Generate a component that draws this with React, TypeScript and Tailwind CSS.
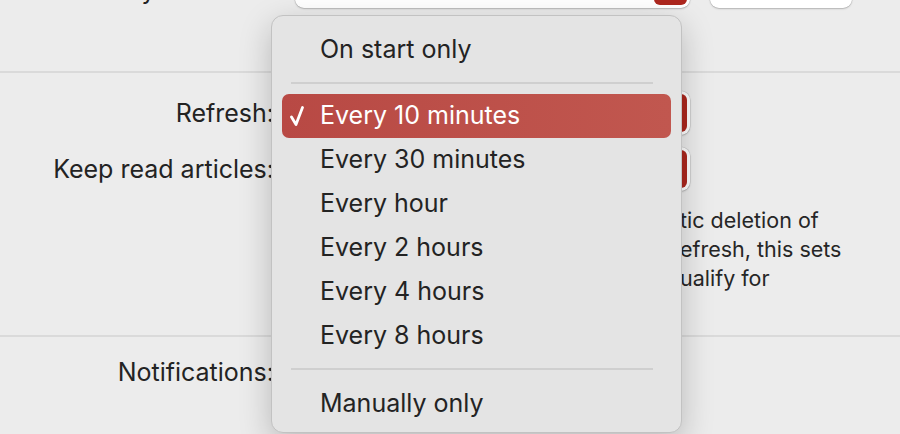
import { Fragment } from 'react';

const options = ['Every 10 minutes', 'Every 30 minutes', 'Every hour', 'Every 2 hours', 'Every 4 hours', 'Every 8 hours'];

// the start of each line is hidden under the open menu, only the tails show
const descLines = [
  ['Enables automa', 'tic deletion of'],
  ['read articles after each r', 'efresh, this sets'],
  ['how old they must be to q', 'ualify for'],
];

const PopUp = ({ width = 'w-[395px]' }: { width?: string }) => (
  <div className={`flex h-[44px] ${width} justify-end rounded-[9px] bg-white p-[3px] shadow-[0_0_0_0.5px_rgba(0,0,0,0.14),0_1px_2px_rgba(0,0,0,0.18)]`}>
    <div className="w-[33px] rounded-[6px] bg-[#ad271e]" />
  </div>
);

const Check = () => (
  <svg width="14" height="20" viewBox="0 0 14 20" fill="none">
    <path d="M1.5 11 L6 18.5 L12.5 1.5" stroke="white" strokeWidth="2.8" strokeLinecap="round" strokeLinejoin="round" />
  </svg>
);

const Separator = () => (
  <div className="flex h-[22px] items-center pl-[9px] pr-[18px]">
    <div className="h-[2px] w-full bg-[#cfcfcf]" />
  </div>
);

export default function App() {
  return (
    <div className="relative h-[434px] w-[900px] overflow-hidden bg-[#ececec] text-[#232323] font-['Inter','Liberation_Sans',sans-serif]">
      {/* Section above, scrolled mostly out of view */}
      <section className="flex h-[73px] flex-col border-b-2 border-[#dadada]">
        <div className="-mt-[36px] flex items-center">
          <div className="mt-[8px] w-[274px] text-right text-[25px] leading-[30px]">Layout mode:</div>
          <div className="ml-[21px]">
            <PopUp />
          </div>
          <div className="ml-[20px] h-[44px] w-[142px] rounded-[9px] bg-white shadow-[0_0_0_0.5px_rgba(0,0,0,0.14),0_1px_2px_rgba(0,0,0,0.18)]" />
        </div>
      </section>

      {/* Refresh settings */}
      <section className="h-[264px] border-b-2 border-[#dadada] pt-[18px]">
        <div className="flex items-center">
          <div className="w-[274px] text-right text-[25px] leading-[30px]">Refresh:</div>
          <div className="ml-[21px]">
            <PopUp />
          </div>
        </div>
        <div className="mt-[12px] flex items-center">
          <div className="w-[274px] text-right text-[25px] leading-[30px]">Keep read articles:</div>
          <div className="ml-[21px]">
            <PopUp />
          </div>
        </div>
        <div className="ml-[295px] mt-[15px] text-[21.5px] leading-[29px] text-[#262626]">
          {descLines.map(([hidden, tail]) => (
            <div key={tail} className="flex whitespace-nowrap">
              <span className="invisible inline-block w-[385px] overflow-hidden text-right">{hidden}</span>
              <span>{tail}</span>
            </div>
          ))}
        </div>
      </section>

      {/* Notifications */}
      <section className="pt-[20px]">
        <div className="flex items-center">
          <div className="w-[274px] text-right text-[25px] leading-[30px]">Notifications:</div>
        </div>
      </section>

      {/* Open pop-up menu */}
      <div className="absolute left-[271px] top-[15px] h-[418px] w-[411px] rounded-[12px] border border-[#c2c2c2] bg-[#e4e4e4] px-[10px] pt-[12px] text-[25px] shadow-[0_10px_32px_rgba(0,0,0,0.22)]">
        <div className="flex h-[44px] items-center pl-[38px]">On start only</div>
        <Separator />
        {options.map((o, i) => (
          <Fragment key={o}>
            {i === 0 ? (
              <div className="flex h-[44px] items-center rounded-[7px] bg-gradient-to-r from-[#b84944] to-[#c1574f] pl-[8px] text-white">
                <Check />
                <span className="ml-[16px]">{o}</span>
              </div>
            ) : (
              <div className="flex h-[44px] items-center pl-[38px]">{o}</div>
            )}
          </Fragment>
        ))}
        <Separator />
        <div className="mt-[2px] flex h-[44px] items-center pl-[38px]">Manually only</div>
      </div>
    </div>
  );
}
